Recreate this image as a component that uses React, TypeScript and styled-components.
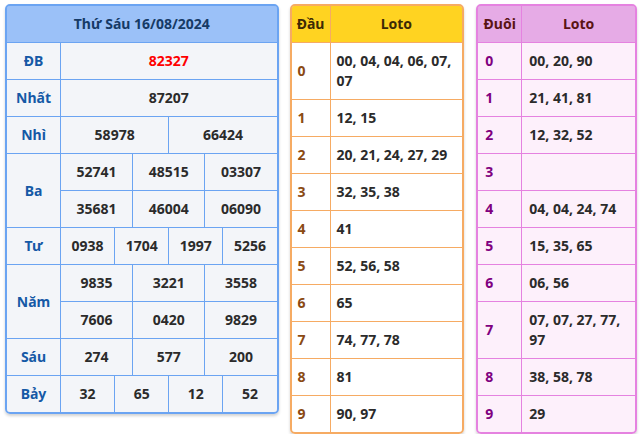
import React from "react";
import styled, { createGlobalStyle } from "styled-components";

const Global = createGlobalStyle`
  html, body { margin: 0; padding: 0; background: #ffffff; }
  body { font-family: "Noto Sans", "Open Sans", sans-serif; }
`;

const Page = styled.div`
  display: flex;
  align-items: flex-start;
  gap: 11px;
  padding: 4px 5px;
`;

type Theme = {
  border: string;
  head: string;
  headText: string;
  body: string;
  key: string;
};

const Card = styled.div<{ $w: number; $t: Theme; $mr?: number }>`
  width: ${(p) => p.$w}px;
  box-sizing: border-box;
  border: 2px solid ${(p) => p.$t.border};
  border-radius: 5px;
  overflow: hidden;
  box-shadow: 0 2px 3px rgba(0, 0, 0, 0.18);
  margin-right: ${(p) => p.$mr ?? 0}px;
`;

const Grid = styled.div<{ $cols: string; $t: Theme }>`
  display: grid;
  grid-template-columns: ${(p) => p.$cols};
  grid-auto-rows: minmax(36px, auto);
  gap: 1px;
  background: ${(p) => p.$t.border};
  font-size: 14px;
  font-weight: 700;
  line-height: 20px;
`;

const Head = styled.div<{ $t: Theme; $span?: number }>`
  grid-column: span ${(p) => p.$span ?? 1};
  background: ${(p) => p.$t.head};
  color: ${(p) => p.$t.headText};
  display: flex;
  align-items: center;
  justify-content: center;
  padding: 0 4px;
`;

const Label = styled.div<{ $t: Theme; $rows?: number }>`
  grid-row: span ${(p) => p.$rows ?? 1};
  background: ${(p) => p.$t.body};
  color: ${(p) => p.$t.key};
  display: flex;
  align-items: center;
  justify-content: center;
`;

const Num = styled.div<{ $t: Theme; $span: number; $red?: boolean }>`
  grid-column: span ${(p) => p.$span};
  background: ${(p) => p.$t.body};
  color: ${(p) => (p.$red ? "#ff0000" : "#2b2b2b")};
  display: flex;
  align-items: center;
  justify-content: center;
`;

const Key = styled.div<{ $t: Theme; $pad: number }>`
  background: ${(p) => p.$t.body};
  color: ${(p) => p.$t.key};
  display: flex;
  align-items: center;
  padding: 8px ${(p) => p.$pad}px;
`;

const Loto = styled.div<{ $t: Theme; $pad: number }>`
  background: ${(p) => p.$t.body};
  color: #2b2b2b;
  display: flex;
  align-items: center;
  padding: 8px ${(p) => p.$pad}px;
`;

const blue: Theme = {
  border: "#6ba4f2",
  head: "#9bc1f8",
  headText: "#163a66",
  body: "#f3f5f9",
  key: "#1559a6",
};

const gold: Theme = {
  border: "#f6ab63",
  head: "#ffd321",
  headText: "#3d2a05",
  body: "#ffffff",
  key: "#8b4a13",
};

const pink: Theme = {
  border: "#e582e0",
  head: "#e6abe6",
  headText: "#5a1414",
  body: "#fdf0fb",
  key: "#800080",
};

const prizes: { label: string; rows: string[][] }[] = [
  { label: "ĐB", rows: [["82327"]] },
  { label: "Nhất", rows: [["87207"]] },
  { label: "Nhì", rows: [["58978", "66424"]] },
  {
    label: "Ba",
    rows: [
      ["52741", "48515", "03307"],
      ["35681", "46004", "06090"],
    ],
  },
  { label: "Tư", rows: [["0938", "1704", "1997", "5256"]] },
  {
    label: "Năm",
    rows: [
      ["9835", "3221", "3558"],
      ["7606", "0420", "9829"],
    ],
  },
  { label: "Sáu", rows: [["274", "577", "200"]] },
  { label: "Bảy", rows: [["32", "65", "12", "52"]] },
];

const dau = [
  "00, 04, 04, 06, 07, 07",
  "12, 15",
  "20, 21, 24, 27, 29",
  "32, 35, 38",
  "41",
  "52, 56, 58",
  "65",
  "74, 77, 78",
  "81",
  "90, 97",
];

const duoi = [
  "00, 20, 90",
  "21, 41, 81",
  "12, 32, 52",
  "",
  "04, 04, 24, 74",
  "15, 35, 65",
  "06, 56",
  "07, 07, 27, 77, 97",
  "38, 58, 78",
  "29",
];

export default function App() {
  return (
    <>
      <Global />
      <Page>
        <Card $w={274} $t={blue}>
          <Grid $cols="53px repeat(12, 1fr)" $t={blue}>
            <Head $t={blue} $span={13}>
              Thứ Sáu 16/08/2024
            </Head>
            {prizes.map((p) => (
              <React.Fragment key={p.label}>
                <Label $t={blue} $rows={p.rows.length}>
                  {p.label}
                </Label>
                {p.rows.map((r, ri) =>
                  r.map((n, ni) => (
                    <Num
                      key={`${ri}-${ni}`}
                      $t={blue}
                      $span={12 / r.length}
                      $red={p.label === "ĐB"}
                    >
                      {n}
                    </Num>
                  ))
                )}
              </React.Fragment>
            ))}
          </Grid>
        </Card>
        <Card $w={175} $t={gold} $mr={1}>
          <Grid $cols="38px 1fr" $t={gold}>
            <Head $t={gold}>Đầu</Head>
            <Head $t={gold}>Loto</Head>
            {dau.map((v, i) => (
              <React.Fragment key={i}>
                <Key $t={gold} $pad={6}>
                  {i}
                </Key>
                <Loto $t={gold} $pad={6}>
                  {v}
                </Loto>
              </React.Fragment>
            ))}
          </Grid>
        </Card>
        <Card $w={161} $t={pink}>
          <Grid $cols="43px 1fr" $t={pink}>
            <Head $t={pink}>Đuôi</Head>
            <Head $t={pink}>Loto</Head>
            {duoi.map((v, i) => (
              <React.Fragment key={i}>
                <Key $t={pink} $pad={7}>
                  {i}
                </Key>
                <Loto $t={pink} $pad={7}>
                  {v}
                </Loto>
              </React.Fragment>
            ))}
          </Grid>
        </Card>
      </Page>
    </>
  );
}
